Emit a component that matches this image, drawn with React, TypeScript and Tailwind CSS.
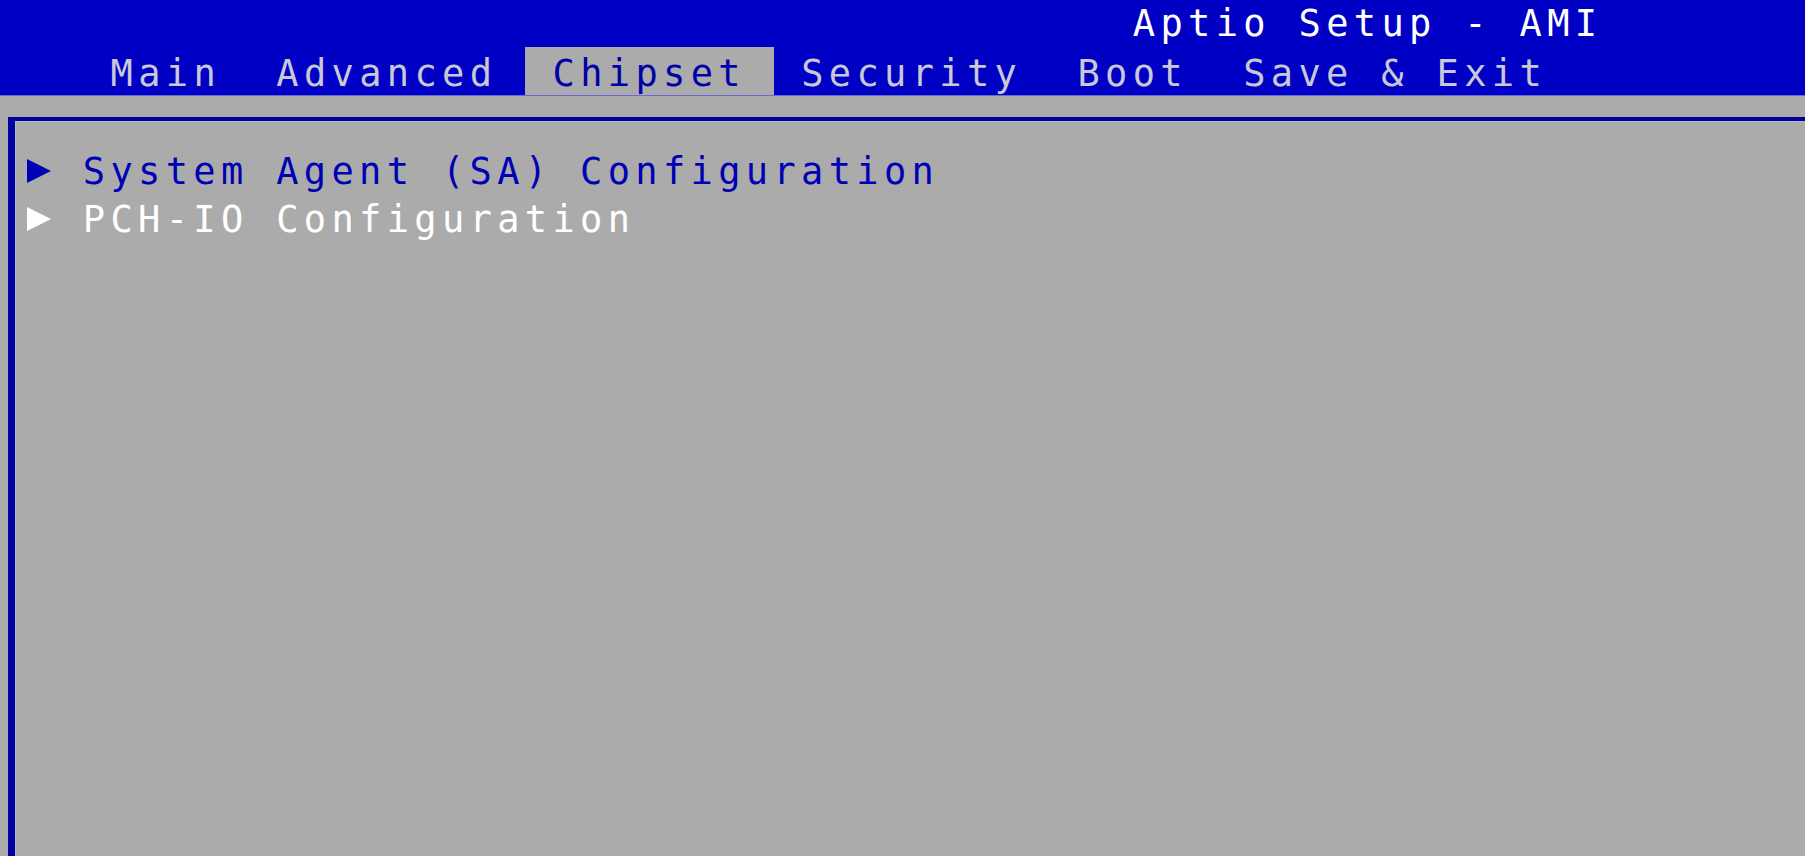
import React from 'react';

const tabs = ['Main', 'Advanced', 'Chipset', 'Security', 'Boot', 'Save & Exit'];
const current = 'Chipset';

const items = [
  { label: 'System Agent (SA) Configuration', active: false },
  { label: 'PCH-IO Configuration', active: true },
];

const Arrow: React.FC<{ active: boolean }> = ({ active }) => (
  <span className="inline-flex w-[55.26px] h-full items-center">
    <svg width="26" height="26" viewBox="0 0 26 26" className="ml-[-2px] mt-[-1px]">
      <polygon points="1,1 25,13 1,25" fill={active ? '#ffffff' : '#0000b4'} />
    </svg>
  </span>
);

export default function App() {
  return (
    <div className="w-[1805px] h-[856px] overflow-hidden flex flex-col bg-[#ababab] font-['DejaVu_Sans_Mono',monospace] text-[37px] tracking-[5.35px] whitespace-pre">
      {/* header: title + tab bar */}
      <div className="h-[96px] bg-[#0000c4] flex flex-col border-b border-[#6a6ad8]">
        <div className="h-[48px] leading-[48px] pl-[1132.8px] text-white">Aptio Setup - AMI</div>
        <div className="h-[47px] flex pl-[82.9px] text-[#c8c8d8]">
          {tabs.map((t) => (
            <span
              key={t}
              className={
                t === current
                  ? 'h-[48px] mt-[-1px] leading-[53px] px-[27.63px] bg-[#ababab] text-[#0000a8]'
                  : 'h-[47px] leading-[52px] px-[27.63px]'
              }
            >
              {t}
            </span>
          ))}
        </div>
      </div>

      {/* main page box */}
      <div className="flex-1 pt-[21px] pl-[8px]">
        <div className="h-full border-t-4 border-l-[7px] border-[#00009c] shadow-[inset_1px_1px_0_#b4b4d8] pt-[26px] pl-[12.6px]">
          {items.map((it) => (
            <div
              key={it.label}
              className={
                'h-[48px] leading-[50px] flex ' +
                (it.active ? 'text-white' : 'text-[#0000b4]')
              }
            >
              <Arrow active={it.active} />
              <span>{it.label}</span>
            </div>
          ))}
        </div>
      </div>
    </div>
  );
}
